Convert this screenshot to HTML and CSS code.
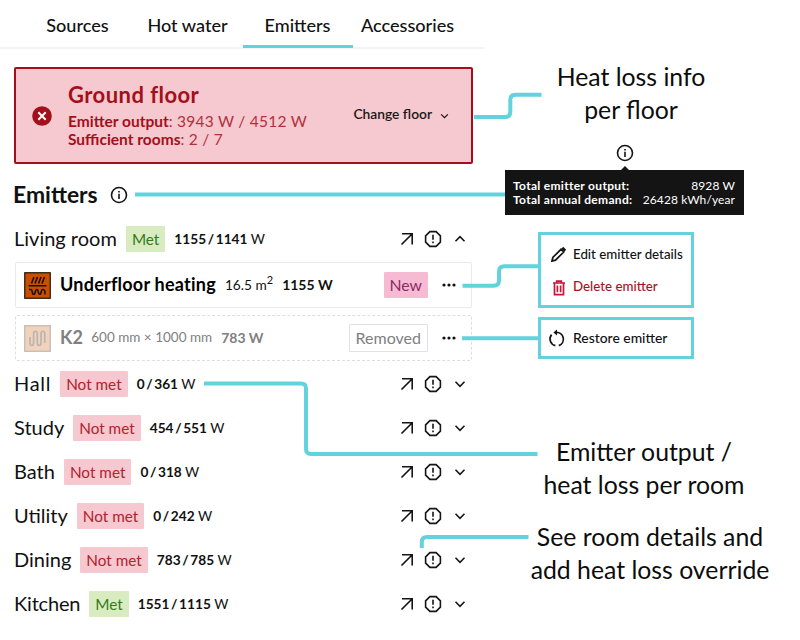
FILE: index.html
```html
<!DOCTYPE html>
<html lang="en">
<head>
    <meta charset="UTF-8">
    <meta name="viewport" content="width=device-width, initial-scale=1.0">
    <title>Emitters</title>
    <link rel="stylesheet" href="styles.css">
</head>
<body>
    <!-- Shared icons -->
    <svg class="icon-defs" width="0" height="0">
        <symbol id="icon-arrow" viewBox="0 0 14 14"><path d="M1.5 12.5 L12 2 M2 1.8 H12.2 V12.4" /></symbol>
        <symbol id="icon-alert" viewBox="0 0 18 18"><path d="M5.9 1.6 H12.1 L16.4 5.9 V12.1 L12.1 16.4 H5.9 L1.6 12.1 V5.9 Z M9 4.8 V9.8 M9 11.6 V13.2" /></symbol>
        <symbol id="icon-down" viewBox="0 0 12 8"><path d="M1.5 1.8 L6 6.3 L10.5 1.8" /></symbol>
        <symbol id="icon-up" viewBox="0 0 12 8"><path d="M1.5 6.2 L6 1.7 L10.5 6.2" /></symbol>
        <symbol id="icon-info" viewBox="0 0 18 18"><circle cx="9" cy="9" r="7.5" /><path d="M9 7.8 V13 M9 5 V6.5" /></symbol>
        <symbol id="icon-dots" viewBox="0 0 14 4"><circle cx="2" cy="2" r="1.6" /><circle cx="7" cy="2" r="1.6" /><circle cx="12" cy="2" r="1.6" /></symbol>
    </svg>

    <div class="page">
        <div class="panel">
            <div class="tabs">
                <div class="tab">Sources</div>
                <div class="tab">Hot water</div>
                <div class="tab active">Emitters</div>
                <div class="tab">Accessories</div>
            </div>

            <div class="floor">
                <svg class="floor-icon" viewBox="0 0 20 20"><circle cx="10" cy="10" r="9.8" /><path d="M6.3 6.3 L13.7 13.7 M13.7 6.3 L6.3 13.7" /></svg>
                <div class="floor-text">
                    <div class="floor-title">Ground floor</div>
                    <div class="floor-line"><b>Emitter output</b>: 3943 W / 4512 W</div>
                    <div class="floor-line"><b>Sufficient rooms</b>: 2 / 7</div>
                </div>
                <div class="change">Change floor <svg class="icon chevron-small"><use href="#icon-down" /></svg></div>
            </div>

            <div class="heading">Emitters <svg class="icon info"><use href="#icon-info" /></svg></div>

            <div class="room">
                <span class="name">Living room</span>
                <span class="tag met">Met</span>
                <span class="watts"><b>1155 / 1141</b> W</span>
                <span class="actions"><svg class="icon arrow"><use href="#icon-arrow" /></svg><svg class="icon alert"><use href="#icon-alert" /></svg><svg class="icon chevron"><use href="#icon-up" /></svg></span>
            </div>

            <div class="emitter">
                <svg class="emitter-icon" viewBox="0 0 27 27">
                    <rect x="0.75" y="0.75" width="25.5" height="25.5" fill="#c94f00" stroke="#241204" stroke-width="1.2" />
                    <path d="M7.5 11.5 L10 5 M11 11.5 L13.5 5 M14.5 11.5 L17 5 M18 11.5 L20.5 5 M4.5 13.7 H22.5 M5 17.5 H7 C9 17.5 7.5 22.3 9.7 22.3 C12 22.3 10.5 17.5 12.7 17.5 C15 17.5 13.5 22.3 15.7 22.3 C18 22.3 16.5 17.5 18.7 17.5 C21 17.5 21 19 21 22.5" fill="none" stroke="#1c1005" stroke-width="1.6" />
                </svg>
                <span class="emitter-name">Underfloor heating</span>
                <span class="size">16.5 m<sup>2</sup></span>
                <span class="power">1155 W</span>
                <span class="tag new">New</span>
                <svg class="dots"><use href="#icon-dots" /></svg>
            </div>

            <div class="emitter removed">
                <svg class="emitter-icon" viewBox="0 0 27 27">
                    <rect x="0.75" y="0.75" width="25.5" height="25.5" fill="#f3d2bc" stroke="#c9c0ba" stroke-width="1.5" />
                    <path d="M6 12 V17.5 C6 21.5 9.6 21.5 9.6 17.5 V9 C9.6 5.3 13.3 5.3 13.3 9 V17.5 C13.3 21.5 17 21.5 17 17.5 V9 C17 5.3 20.8 5.3 20.8 9 V18" fill="none" stroke="#b9b6b4" stroke-width="1.7" />
                </svg>
                <span class="emitter-name">K2</span>
                <span class="size">600 mm × 1000 mm</span>
                <span class="power">783 W</span>
                <span class="tag outline">Removed</span>
                <svg class="dots"><use href="#icon-dots" /></svg>
            </div>

            <div class="rooms">
                <div class="room">
                    <span class="name">Hall</span>
                    <span class="tag not-met">Not met</span>
                    <span class="watts"><b>0 / 361</b> W</span>
                    <span class="actions"><svg class="icon arrow"><use href="#icon-arrow" /></svg><svg class="icon alert"><use href="#icon-alert" /></svg><svg class="icon chevron"><use href="#icon-down" /></svg></span>
                </div>
                <div class="room">
                    <span class="name">Study</span>
                    <span class="tag not-met">Not met</span>
                    <span class="watts"><b>454 / 551</b> W</span>
                    <span class="actions"><svg class="icon arrow"><use href="#icon-arrow" /></svg><svg class="icon alert"><use href="#icon-alert" /></svg><svg class="icon chevron"><use href="#icon-down" /></svg></span>
                </div>
                <div class="room">
                    <span class="name">Bath</span>
                    <span class="tag not-met">Not met</span>
                    <span class="watts"><b>0 / 318</b> W</span>
                    <span class="actions"><svg class="icon arrow"><use href="#icon-arrow" /></svg><svg class="icon alert"><use href="#icon-alert" /></svg><svg class="icon chevron"><use href="#icon-down" /></svg></span>
                </div>
                <div class="room">
                    <span class="name">Utility</span>
                    <span class="tag not-met">Not met</span>
                    <span class="watts"><b>0 / 242</b> W</span>
                    <span class="actions"><svg class="icon arrow"><use href="#icon-arrow" /></svg><svg class="icon alert"><use href="#icon-alert" /></svg><svg class="icon chevron"><use href="#icon-down" /></svg></span>
                </div>
                <div class="room">
                    <span class="name">Dining</span>
                    <span class="tag not-met">Not met</span>
                    <span class="watts"><b>783 / 785</b> W</span>
                    <span class="actions"><svg class="icon arrow"><use href="#icon-arrow" /></svg><svg class="icon alert"><use href="#icon-alert" /></svg><svg class="icon chevron"><use href="#icon-down" /></svg></span>
                </div>
                <div class="room">
                    <span class="name">Kitchen</span>
                    <span class="tag met">Met</span>
                    <span class="watts"><b>1551 / 1115</b> W</span>
                    <span class="actions"><svg class="icon arrow"><use href="#icon-arrow" /></svg><svg class="icon alert"><use href="#icon-alert" /></svg><svg class="icon chevron"><use href="#icon-down" /></svg></span>
                </div>
            </div>
        </div>

        <div class="notes">
            <div class="caption floor-caption">Heat loss info<br>per floor</div>
            <div class="totals">
                <svg class="icon info"><use href="#icon-info" /></svg>
                <div class="totals-arrow"></div>
                <div class="totals-box">
                    <div class="total"><b>Total emitter output:</b><span>8928 W</span></div>
                    <div class="total"><b>Total annual demand:</b><span>26428 kWh/year</span></div>
                </div>
            </div>
            <div class="menu">
                <div class="item">
                    <svg class="menu-icon" viewBox="0 0 18 18"><path d="M2 16 L2.8 12.5 L11 4.3 L13.7 7 L5.5 15.2 Z" /><path class="solid" d="M11.3 3.7 L13.2 1.8 L16.2 4.8 L14.3 6.7 Z" /></svg>
                    <span>Edit emitter details</span>
                </div>
                <div class="item delete">
                    <svg class="menu-icon" viewBox="0 0 18 18"><path d="M3 4 H15 M6.7 3.6 V2.2 H11.3 V3.6 M4.5 4 V15.6 H13.5 V4 M7.4 6.5 V13.2 M10.6 6.5 V13.2" /></svg>
                    <span>Delete emitter</span>
                </div>
            </div>
            <div class="menu restore">
                <div class="item">
                    <svg class="menu-icon" viewBox="0 0 18 18"><path d="M7.4 16.6 A6.8 6.8 0 0 1 3.6 5.6 M8 3.4 A6.8 6.8 0 0 1 10.8 16.6" /><path class="solid" d="M9 0.4 V6.4 L5.4 3.4 Z" /></svg>
                    <span>Restore emitter</span>
                </div>
            </div>
            <div class="caption room-caption">Emitter output /<br>heat loss per room</div>
            <div class="caption detail-caption">See room details and<br>add heat loss override</div>
        </div>

        <!-- Lines from the panel to its notes -->
        <svg class="connectors" viewBox="0 0 800 640">
            <path d="M474 117 H505 Q510.3 117 510.3 112 V100 Q510.3 94.8 515.5 94.8 H541.5" />
            <path d="M135 194.4 H505" />
            <path d="M462.5 285.7 H493.5 Q499 285.7 499 280.5 V271.5 Q499 266.3 504.5 266.3 H539" />
            <path d="M462 338.2 H539" />
            <path d="M204 383.6 H301 Q306 383.6 306 388.6 V449 Q306 454 311 454 H537.5" />
            <path d="M421.8 548 V542 Q421.8 537 427 537 H528.5" />
        </svg>
    </div>
</body>
</html>
```
FILE: styles.css
```css
body {
    margin: 0;
    background-color: #fff;
    color: #111;
    font-family: Lato, sans-serif;
}

.icon-defs {
    display: block;
}

.page {
    position: relative;
    display: flex;
    width: 800px;
    height: 640px;
    overflow: hidden;
}

.panel {
    width: 484px;
    flex: none;
}

.icon {
    fill: none;
    stroke: #151515;
    stroke-width: 1.6;
    flex: none;
}

/* Tabs */
.tabs {
    display: flex;
    box-sizing: border-box;
    height: 49px;
    padding-left: 22.5px;
    border-bottom: 2px solid #f3f3f3;
}

.tab {
    box-sizing: border-box;
    width: 110px;
    height: 48px;
    line-height: 51px;
    text-align: center;
    font-size: 18.1px;
    font-weight: 500;
    white-space: nowrap;
}

.tab.active {
    border-bottom: 3px solid #62d3dd;
}

/* Floor summary */
.floor {
    display: flex;
    align-items: center;
    box-sizing: border-box;
    width: 459px;
    height: 97px;
    margin: 18px 0 0 14px;
    padding: 0 22px 0 16px;
    border: 2px solid #a30f1a;
    border-radius: 2px;
    background-color: #f6c8cf;
    color: #a30f1a;
}

.floor-icon {
    width: 20px;
    height: 20px;
    margin-right: 16px;
    fill: #a30f1a;
    stroke: #fff;
    stroke-width: 2;
}

.floor-icon circle {
    stroke: none;
}

.floor-text {
    margin-top: -4px;
}

.floor-title {
    margin-bottom: 2px;
    font-size: 22px;
    font-weight: 700;
    letter-spacing: 0.45px;
    line-height: 30px;
}

.floor-line {
    color: #b3303c;
    font-size: 15.5px;
    letter-spacing: 0.25px;
    line-height: 18px;
    white-space: nowrap;
}

.floor-line b {
    color: #a30f1a;
    letter-spacing: 0;
}

.change {
    display: flex;
    align-items: center;
    gap: 8px;
    margin: -4px 0 0 auto;
    color: #1c1618;
    font-size: 13.8px;
    font-weight: 600;
}

.chevron-small {
    width: 9px;
    height: 6px;
    margin-top: 4px;
}

.heading {
    display: flex;
    align-items: center;
    gap: 12px;
    height: 32px;
    margin: 14px 0 0 13px;
    font-size: 22.9px;
    font-weight: 700;
    line-height: 30px;
}

.heading .info {
    margin-top: 2px;
}

.info {
    width: 18px;
    height: 18px;
}

/* Rooms */
.room {
    display: flex;
    align-items: center;
    gap: 9px;
    height: 44px;
    margin-left: 14px;
    padding-right: 18px;
    white-space: nowrap;
}

.heading + .room {
    margin: 7px 0 1px 14px;
}

.name {
    margin-top: -2px;
    font-size: 20px;
}

.rooms .room:nth-child(1) .name {
    letter-spacing: 0.7px;
}

.rooms .room:nth-child(6) .name {
    letter-spacing: -0.2px;
}

.tag {
    box-sizing: border-box;
    height: 26px;
    padding: 0 6px;
    border-radius: 1px;
    font-size: 15.3px;
    line-height: 26px;
}

.met {
    background-color: #d9ebc1;
    color: #347a1c;
}

.not-met {
    background-color: #f6c8cf;
    color: #b3222e;
}

.watts {
    margin-top: -1px;
    font-size: 13.7px;
}

.watts b {
    word-spacing: -1.7px;
}

.actions {
    display: flex;
    align-items: center;
    margin-left: auto;
}

.arrow {
    width: 14px;
    height: 14px;
    margin: -1px 10px 0 0;
}

.alert {
    width: 18px;
    height: 18px;
    margin-right: 12px;
}

.chevron {
    width: 12px;
    height: 8px;
}

/* Emitters */
.emitter {
    display: flex;
    align-items: center;
    box-sizing: border-box;
    width: 457px;
    height: 46px;
    margin: 0 0 7px 15px;
    padding: 0 15px 0 8px;
    border: 1px solid #e9e9e9;
    border-radius: 2px;
    white-space: nowrap;
}

.emitter-icon {
    width: 27px;
    height: 27px;
    margin-right: 9px;
}

.emitter-name {
    margin: -3px 9px 0 0;
    color: #000;
    font-size: 18px;
    font-weight: 700;
    letter-spacing: 0.23px;
}

.size {
    margin: -2px 9px 0 0;
    font-size: 13.7px;
}

.size sup {
    font-size: 11px;
    line-height: 0;
}

.power {
    margin-top: -2px;
    font-size: 14px;
    font-weight: 700;
}

.new {
    margin-left: auto;
    background-color: #f6bad3;
    color: #8d2a63;
    font-size: 15.8px;
}

.dots {
    width: 14px;
    height: 4px;
    margin-left: 14px;
    fill: #111;
}

.removed {
    border: 1px dashed #dedede;
    margin-bottom: 1px;
}

.removed .emitter-name,
.removed .size,
.removed .power,
.outline {
    color: #808080;
}

.removed .emitter-name {
    margin-right: 8px;
}

.removed .size {
    font-size: 13.5px;
}

.outline {
    height: 28px;
    margin-left: auto;
    border: 1px solid #e2e2e2;
    font-size: 16px;
}

/* Notes */
.notes {
    display: flex;
    flex-direction: column;
    width: 316px;
}

.caption {
    color: #0c0c0c;
    font-size: 24.8px;
    line-height: 33px;
    text-align: center;
    white-space: nowrap;
}

.floor-caption {
    width: 294px;
    margin-top: 60px;
}

.totals {
    display: flex;
    flex-direction: column;
    align-items: center;
    width: 239px;
    margin: 18px 0 0 21px;
}

.totals-arrow {
    margin-top: 4px;
    border: 4px solid transparent;
    border-top: 0;
    border-bottom-color: #141414;
}

.totals-box {
    box-sizing: border-box;
    width: 239px;
    height: 45px;
    padding: 9px 9px 0 8px;
    background-color: #141414;
    color: #fff;
    font-size: 12px;
    letter-spacing: 0.1px;
    line-height: 14px;
}

.total {
    display: flex;
    justify-content: space-between;
}

.total b {
    letter-spacing: 0.3px;
}

.menu {
    display: flex;
    flex-direction: column;
    justify-content: center;
    box-sizing: border-box;
    width: 156px;
    height: 76px;
    margin: 17px 0 0 54px;
    padding-left: 9px;
    border: 3.5px solid #62d3dd;
}

.restore {
    height: 42px;
    margin-top: 9px;
    padding-left: 7px;
}

.item {
    display: flex;
    align-items: center;
    gap: 5px;
    height: 32px;
    font-size: 13.3px;
    font-weight: 500;
    white-space: nowrap;
}

.item span {
    margin-top: -1px;
}

.restore .item {
    gap: 7px;
    font-size: 13.9px;
}

.restore .item span {
    margin-top: -2px;
}

.delete {
    color: #a8121e;
}

.menu-icon {
    width: 18px;
    height: 18px;
    fill: none;
    stroke: #151515;
    stroke-width: 1.7;
}

.menu-icon .solid {
    fill: #151515;
    stroke: none;
}

.delete .menu-icon {
    stroke: #c8143c;
    margin-top: 3px;
}

.room-caption {
    width: 320px;
    margin-top: 76px;
}

.detail-caption {
    width: 332px;
    margin-top: 19px;
}

.connectors {
    position: absolute;
    top: 0;
    left: 0;
    width: 800px;
    height: 640px;
    fill: none;
    stroke: #62d3dd;
    stroke-width: 4;
    pointer-events: none;
}
```
